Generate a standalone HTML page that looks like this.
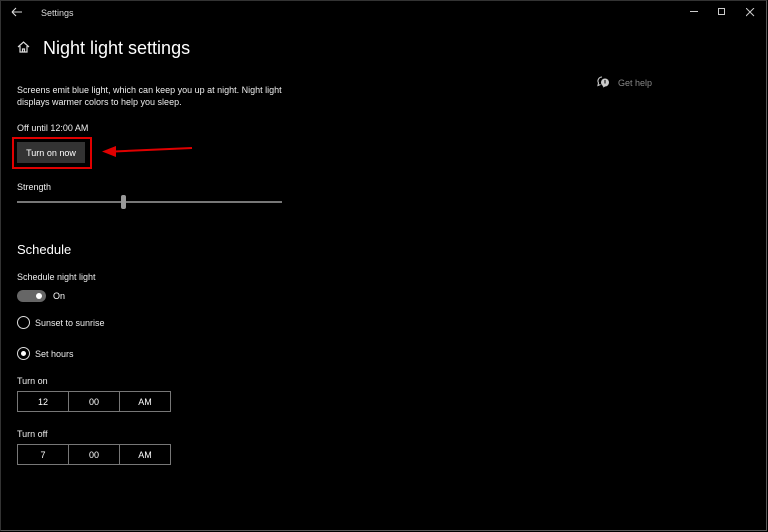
<!DOCTYPE html>
<html><head><meta charset="utf-8"><style>
*{margin:0;padding:0;box-sizing:border-box}
body{width:768px;height:532px;background:#000;overflow:hidden;font-family:"Liberation Sans",sans-serif;color:#fff;position:relative}
.win{position:absolute;left:0;top:0;width:767px;height:531px;border:1px solid #5a5a5a;border-left-color:#333;border-top-color:#333}
.t{position:absolute;white-space:nowrap}
.s{font-size:9px}
.box{position:absolute;border:1px solid #777;display:flex;width:154px;height:21px}
.box div{flex:1;border-right:1px solid #777;font-size:9px;display:flex;align-items:center;justify-content:center}
.box div:last-child{border-right:none}
</style></head><body>
<div class="win"></div>
<svg class="t" style="left:11px;top:7px" width="12" height="10"><path d="M1 5H11M1 5L5 1M1 5L5 9" stroke="#ddd" stroke-width="1.1" fill="none"/></svg>
<div class="t s" style="left:41px;top:8px;color:#ddd">Settings</div>
<div class="t" style="left:690px;top:11px;width:8px;height:1px;background:#ccc"></div>
<div class="t" style="left:718px;top:8px;width:7px;height:7px;border:1px solid #ccc"></div>
<svg class="t" style="left:746px;top:8px" width="9" height="9"><path d="M0 0L8 8M8 0L0 8" stroke="#ccc" stroke-width="1"/></svg>
<svg class="t" style="left:17px;top:41px" width="13" height="12"><path d="M1 6L6.5 1L12 6M3 5V11H10V5M5.5 11V8H7.5V11" stroke="#ddd" stroke-width="1.2" fill="none"/></svg>
<div class="t" style="left:43px;top:38px;font-size:18px;color:#fff">Night light settings</div>
<div class="t s" style="left:17px;top:84px;line-height:12px;color:#eee">Screens emit blue light, which can keep you up at night. Night light<br>displays warmer colors to help you sleep.</div>
<div class="t s" style="left:17px;top:123px;color:#eee">Off until 12:00 AM</div>
<div class="t" style="left:12px;top:137px;width:80px;height:32px;border:2px solid #e00000"></div>
<div class="t" style="left:17px;top:142px;width:68px;height:21px;background:#333;font-size:9px;display:flex;align-items:center;justify-content:center">Turn on now</div>
<svg class="t" style="left:100px;top:143px" width="95" height="16"><path d="M14 8.5L92 5" stroke="#e00000" stroke-width="2"/><path d="M2 8.5L16 3V14Z" fill="#e00000"/></svg>
<div class="t s" style="left:17px;top:182px;color:#eee">Strength</div>
<div class="t" style="left:17px;top:201px;width:265px;height:2px;background:#777"></div>
<div class="t" style="left:121px;top:195px;width:5px;height:14px;border-radius:2px;background:#999"></div>
<div class="t" style="left:17px;top:242px;font-size:13px">Schedule</div>
<div class="t s" style="left:17px;top:272px;color:#eee">Schedule night light</div>
<div class="t" style="left:17px;top:290px;width:29px;height:12px;border-radius:6px;background:#666"></div>
<div class="t" style="left:36px;top:293px;width:6px;height:6px;border-radius:3px;background:#fff"></div>
<div class="t s" style="left:53px;top:291px">On</div>
<div class="t" style="left:17px;top:316px;width:13px;height:13px;border-radius:50%;border:1.5px solid #ddd"></div>
<div class="t s" style="left:35px;top:318px;color:#eee">Sunset to sunrise</div>
<div class="t" style="left:17px;top:347px;width:13px;height:13px;border-radius:50%;border:1.5px solid #ddd"></div>
<div class="t" style="left:21px;top:351px;width:5px;height:5px;border-radius:50%;background:#fff"></div>
<div class="t s" style="left:35px;top:349px;color:#eee">Set hours</div>
<div class="t s" style="left:17px;top:376px;color:#eee">Turn on</div>
<div class="box" style="left:17px;top:391px"><div>12</div><div>00</div><div>AM</div></div>
<div class="t s" style="left:17px;top:429px;color:#eee">Turn off</div>
<div class="box" style="left:17px;top:444px"><div>7</div><div>00</div><div>AM</div></div>
<svg class="t" style="left:597px;top:76px" width="13" height="12"><path d="M5 1a4 4 0 0 0-3.5 6L1 9.5L3.5 8.5" stroke="#ccc" fill="none" stroke-width="1.1"/><circle cx="8" cy="6.5" r="4" fill="#ccc"/><path d="M6 11L8 10" stroke="#ccc"/><rect x="7.5" y="4" width="1" height="3.5" fill="#000"/></svg>
<div class="t s" style="left:618px;top:78px;color:#888">Get help</div>
</body></html>
